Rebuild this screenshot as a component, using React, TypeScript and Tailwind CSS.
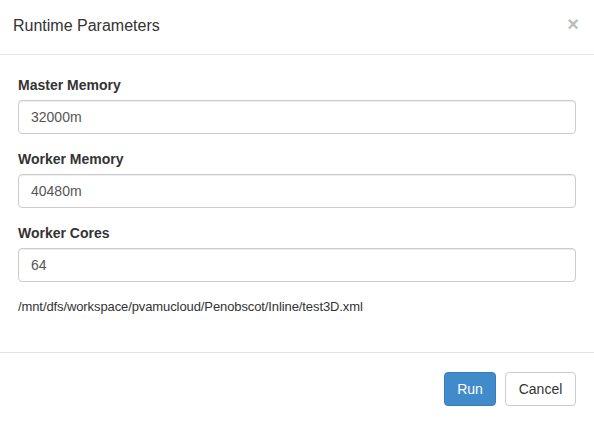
export default function App() {
    const fields = [
        { label: "Master Memory", value: "32000m" },
        { label: "Worker Memory", value: "40480m" },
        { label: "Worker Cores", value: "64" },
    ];

    return (
        <div className="w-[594px] h-[423px] bg-white text-[#333] font-['Liberation_Sans',Arial,sans-serif] overflow-hidden">
            <div className="h-[55px] px-[13px] flex items-center justify-between border-b border-[#e5e5e5]">
                <h4 className="text-[16px] leading-none pb-[2px]">Runtime Parameters</h4>
                <button className="text-[20px] font-bold leading-none text-[#bdbdbd] mr-[2px] mb-[6px]">×</button>
            </div>
            <div className="px-[18px] pt-[20px] pb-[35px]">
                {fields.map((f) => (
                    <div key={f.label} className="mb-[15px]">
                        <label className="block text-[14px] font-bold leading-[20px] mb-[5px]">{f.label}</label>
                        <input
                            readOnly
                            value={f.value}
                            className="block w-full h-[34px] px-[12px] text-[14px] text-[#555] border border-[#ccc] rounded-[4px] shadow-[inset_0_1px_1px_rgba(0,0,0,0.075)] outline-none"
                        />
                    </div>
                ))}
                <p className="text-[13px] leading-[20px] tracking-[-0.1px]">/mnt/dfs/workspace/pvamucloud/Penobscot/Inline/test3D.xml</p>
            </div>
            <div className="border-t border-[#e5e5e5] pt-[19px] px-[18px] flex justify-end gap-[9px]">
                <button className="h-[34px] w-[52px] rounded-[4px] bg-[#428bca] border border-[#357ebd] text-white text-[14px]">Run</button>
                <button className="h-[34px] w-[71px] rounded-[4px] bg-white border border-[#ccc] text-[#333] text-[14px]">Cancel</button>
            </div>
        </div>
    );
}
